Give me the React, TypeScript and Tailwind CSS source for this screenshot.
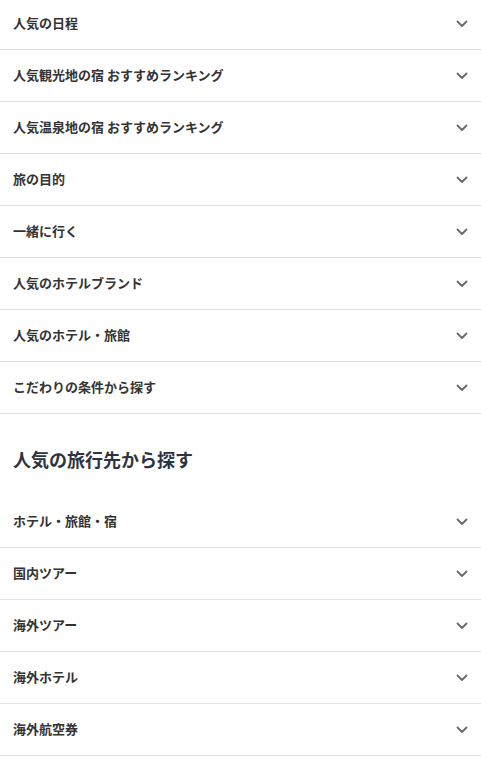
import React from "react";

const group1 = [
  "人気の日程",
  "人気観光地の宿 おすすめランキング",
  "人気温泉地の宿 おすすめランキング",
  "旅の目的",
  "一緒に行く",
  "人気のホテルブランド",
  "人気のホテル・旅館",
  "こだわりの条件から探す",
];

const group2 = ["ホテル・旅館・宿", "国内ツアー", "海外ツアー", "海外ホテル", "海外航空券"];

function Chevron() {
  return (
    <svg width="12" height="8" viewBox="0 0 12 8" fill="none" className="shrink-0">
      <path d="M1.5 1.5 L6 6 L10.5 1.5" stroke="#666b73" strokeWidth="1.8" strokeLinecap="round" strokeLinejoin="round" />
    </svg>
  );
}

function Row({ label }: { label: string }) {
  return (
    <div className="flex h-[52px] items-center justify-between border-b border-[#e2e2e2] pl-[13px] pr-[13px]">
      <span className="mb-[2px] text-[13px] font-bold leading-[18px] text-[#333333]">{label}</span>
      <Chevron />
    </div>
  );
}

export default function App() {
  return (
    <div
      className="w-[481px] bg-white"
      style={{ fontFamily: '"Noto Sans CJK JP", "Noto Sans", sans-serif' }}
    >
      <div className="-mt-[2px]">
        {group1.map((l) => (
          <Row key={l} label={l} />
        ))}
        <div className="h-[82px] pl-[13px] pt-[33px]">
          <h2 className="text-[18px] font-bold leading-[24px] text-[#2d3340]">人気の旅行先から探す</h2>
        </div>
        {group2.map((l) => (
          <Row key={l} label={l} />
        ))}
      </div>
    </div>
  );
}
